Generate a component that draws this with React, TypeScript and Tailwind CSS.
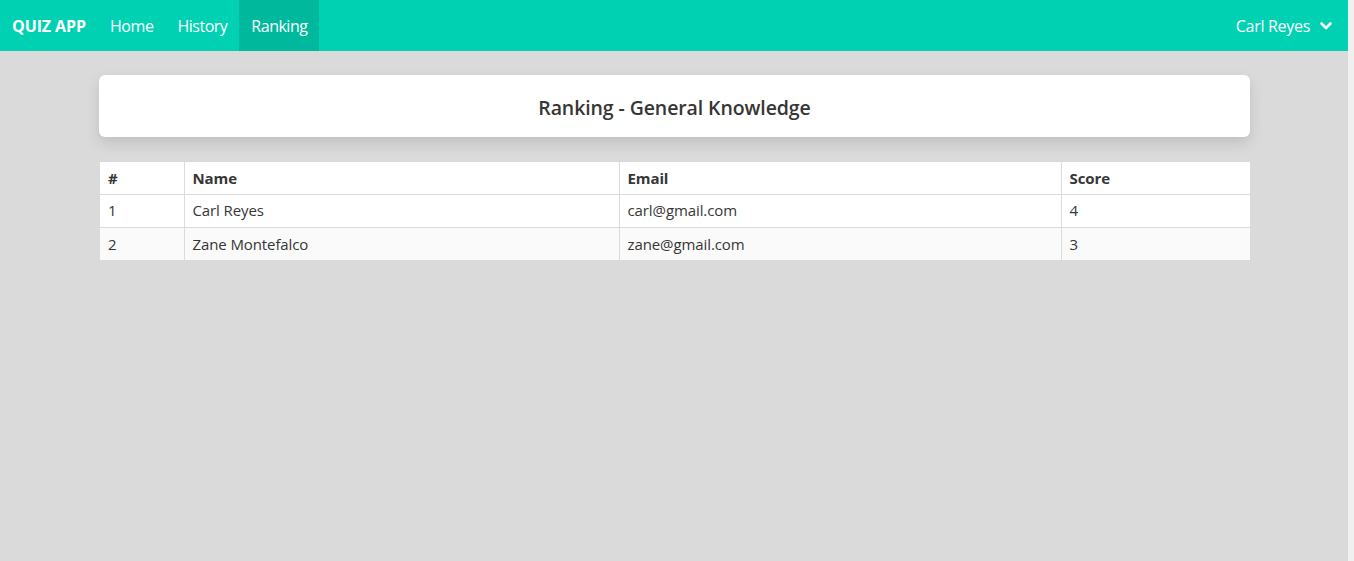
import React from 'react';

type Row = { rank: number; name: string; email: string; score: number };

const rows: Row[] = [
    { rank: 1, name: 'Carl Reyes', email: 'carl@gmail.com', score: 4 },
    { rank: 2, name: 'Zane Montefalco', email: 'zane@gmail.com', score: 3 },
];

const ChevronDown = () => (
    <svg width="14" height="14" viewBox="0 0 14 14" fill="none">
        <path d="M2.5 4.5 L7 9 L11.5 4.5" stroke="white" strokeWidth="2.6" strokeLinecap="round" strokeLinejoin="round" />
    </svg>
);

export default function App() {
    return (
        <div className="flex h-[561px] w-[1354px] overflow-hidden text-[#363636]" style={{ fontFamily: '"Open Sans", "Noto Sans", sans-serif' }}>
            <div className="flex w-[1348px] flex-col bg-[#dadada]">
                <nav className="flex h-[51px] items-stretch bg-[#00d1b2] text-white">
                    <a className="flex items-center px-3 text-[16px] font-bold tracking-[-0.1px]">QUIZ APP</a>
                    <a className="flex items-center px-3 text-[16px] tracking-[-0.4px]">Home</a>
                    <a className="flex items-center px-3 text-[16px] tracking-[-0.5px]">History</a>
                    <a className="flex items-center bg-[#00b89c] px-3 text-[16px] tracking-[-0.5px]">Ranking</a>
                    <div className="ml-auto flex items-center gap-[9px] pr-[15px] text-[16px] tracking-[-0.3px]">
                        <span>Carl Reyes</span>
                        <ChevronDown />
                    </div>
                </nav>

                <main className="ml-[99px] w-[1151px] pt-6">
                    <div className="flex h-[62px] items-center justify-center rounded-md bg-white pt-[3px] shadow-[0_6px_14px_rgba(0,0,0,0.12)]">
                        <h1 className="text-[19.5px] font-semibold tracking-[-0.1px]">Ranking - General Knowledge</h1>
                    </div>

                    <table className="mt-[25px] ml-px w-[1150px] table-fixed border-collapse bg-white text-[15px] tracking-[-0.1px]">
                        <colgroup>
                            <col className="w-[84px]" />
                            <col className="w-[435px]" />
                            <col className="w-[442px]" />
                            <col />
                        </colgroup>
                        <thead>
                            <tr className="h-[32px] text-left">
                                <th className="border-r border-b border-[#dbdbdb] px-2 font-bold">#</th>
                                <th className="border-r border-b border-[#dbdbdb] px-2 font-bold">Name</th>
                                <th className="border-r border-b border-[#dbdbdb] px-2 font-bold">Email</th>
                                <th className="border-b border-[#dbdbdb] px-2 font-bold">Score</th>
                            </tr>
                        </thead>
                        <tbody>
                            {rows.map((r, i) => (
                                <tr key={r.rank} className={i % 2 === 1 ? 'h-[33px] bg-[#fafafa]' : 'h-[33px]'}>
                                    <td className={`border-r border-[#dbdbdb] px-2 ${i < rows.length - 1 ? 'border-b' : ''}`}>{r.rank}</td>
                                    <td className={`border-r border-[#dbdbdb] px-2 ${i < rows.length - 1 ? 'border-b' : ''}`}>{r.name}</td>
                                    <td className={`border-r border-[#dbdbdb] px-2 ${i < rows.length - 1 ? 'border-b' : ''}`}>{r.email}</td>
                                    <td className={`border-[#dbdbdb] px-2 ${i < rows.length - 1 ? 'border-b' : ''}`}>{r.score}</td>
                                </tr>
                            ))}
                        </tbody>
                    </table>
                </main>
            </div>
            <div className="w-[6px] bg-[#f0f0f0]" />
        </div>
    );
}
